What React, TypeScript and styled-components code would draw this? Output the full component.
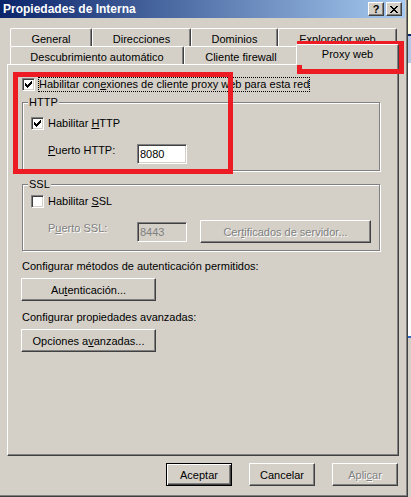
import styled, { createGlobalStyle, css } from "styled-components";

const FACE = "#d4d0c8";
const SHADOW = "#808080";
const DARK = "#404040";

const GlobalStyle = createGlobalStyle`
  html, body {
    margin: 0;
    padding: 0;
    background: ${FACE};
  }
  body {
    font-family: "Liberation Sans", Arial, sans-serif;
    font-size: 11px;
    color: #000;
  }
  #root {
    width: 411px;
    height: 497px;
    overflow: hidden;
  }
`;

const Screen = styled.div`
  display: flex;
  width: 411px;
  height: 497px;
`;

const Window = styled.div`
  position: relative;
  box-sizing: border-box;
  width: 408px;
  height: 497px;
  padding-right: 2px;
  background: ${FACE};
  border-right: 1px solid ${DARK};
  border-bottom: 1px solid ${DARK};
  box-shadow: inset -1px -1px 0 ${SHADOW};
  display: flex;
  flex-direction: column;
`;

const TitleBar = styled.div`
  height: 18px;
  display: flex;
  align-items: center;
  padding: 0 3px;
  background: linear-gradient(to right, #0a246a, #a6caf0);
`;

const TitleText = styled.span`
  flex: 1;
  color: #fff;
  font-weight: bold;
  font-size: 12px;
  line-height: 13px;
  white-space: nowrap;
`;

const CaptionButtons = styled.div`
  display: flex;
  gap: 2px;
`;

const CaptionButton = styled.span`
  box-sizing: border-box;
  width: 16px;
  height: 14px;
  display: flex;
  align-items: center;
  justify-content: center;
  background: ${FACE};
  border: 1px solid;
  border-color: #fff ${DARK} ${DARK} #fff;
  box-shadow: inset -1px -1px 0 ${SHADOW};
  font-weight: bold;
  font-size: 11px;
  line-height: 11px;
`;

const Body = styled.div`
  display: flex;
  flex-direction: column;
  padding: 10px 0 0 7px;
`;

const TabRow = styled.div`
  display: flex;
  align-items: flex-start;
  height: 18px;
  padding-left: 3px;
`;

const Tab = styled.div<{ $w: number; $active?: boolean }>`
  box-sizing: border-box;
  flex-shrink: 0;
  width: ${(p) => p.$w}px;
  height: 18px;
  padding-top: 2px;
  display: flex;
  align-items: center;
  justify-content: center;
  white-space: nowrap;
  background: ${FACE};
  border-top: 1px solid #fff;
  border-left: 1px solid #fff;
  border-right: 1px solid ${DARK};
  border-radius: 2px 2px 0 0;
  box-shadow: inset -1px 0 0 ${SHADOW};
  ${(p) =>
    p.$active &&
    css`
      width: ${p.$w + 4}px;
      height: 21px;
      margin: -2px -2px -1px;
      padding: 2px 0 4px;
      z-index: 1;
    `}
`;

const Panel = styled.div`
  box-sizing: border-box;
  width: 392px;
  height: 392px;
  padding: 12px 0 0 14px;
  display: flex;
  flex-direction: column;
  align-items: flex-start;
  border-top: 1px solid #fff;
  border-left: 1px solid #fff;
  border-right: 1px solid ${DARK};
  border-bottom: 1px solid ${DARK};
  box-shadow: inset -1px -1px 0 ${SHADOW};
`;

const CheckRow = styled.div`
  display: flex;
  align-items: center;
  height: 15px;
`;

const CheckBox = styled.span`
  box-sizing: border-box;
  width: 13px;
  height: 13px;
  display: flex;
  align-items: center;
  justify-content: center;
  background: #fff;
  border: 1px solid;
  border-color: ${SHADOW} #fff #fff ${SHADOW};
  box-shadow: inset 1px 1px 0 ${DARK}, inset -1px -1px 0 ${FACE};
`;

const CheckLabel = styled.span<{ $focused?: boolean }>`
  box-sizing: border-box;
  height: 15px;
  margin-left: 3px;
  line-height: 13px;
  white-space: nowrap;
  border: 1px ${(p) => (p.$focused ? "dotted #000" : "solid transparent")};
`;

const Key = styled.u`
  text-decoration: underline;
`;

const Group = styled.fieldset<{ $mt: number; $pt: number; $pb: number }>`
  box-sizing: border-box;
  width: 358px;
  min-width: 0;
  margin: ${(p) => p.$mt}px 0 0;
  padding: ${(p) => p.$pt}px 0 ${(p) => p.$pb}px 8px;
  border: 1px solid ${SHADOW};
  box-shadow: inset 1px 1px 0 #fff, 1px 1px 0 #fff;
`;

const GroupTitle = styled.legend`
  margin-left: -3px;
  padding: 0 1px;
  line-height: 13px;
  background: ${FACE};
`;

const FieldLabel = styled.span<{ $disabled?: boolean }>`
  box-sizing: border-box;
  width: 89px;
  line-height: 13px;
  white-space: nowrap;
  ${(p) =>
    p.$disabled &&
    css`
      color: ${SHADOW};
      text-shadow: 1px 1px 0 #fff;
    `}
`;

const TextBox = styled.div<{ $disabled?: boolean }>`
  box-sizing: border-box;
  width: 50px;
  height: 20px;
  padding-left: 2px;
  display: flex;
  align-items: center;
  line-height: 13px;
  background: ${(p) => (p.$disabled ? FACE : "#fff")};
  color: ${(p) => (p.$disabled ? SHADOW : "#000")};
  border: 1px solid;
  border-color: ${SHADOW} #fff #fff ${SHADOW};
  box-shadow: inset 1px 1px 0 ${DARK}, inset -1px -1px 0 ${FACE};
`;

const FieldRow = styled.div<{ $mt: number; $lead: number }>`
  display: flex;
  align-items: flex-start;
  margin-top: ${(p) => p.$mt}px;
  padding-left: 17px;

  & > ${FieldLabel}, & > ${TextBox} {
    margin-top: ${(p) => p.$lead}px;
  }
`;

const PushButton = styled.button<{ $w: number; $default?: boolean; $disabled?: boolean }>`
  box-sizing: border-box;
  flex-shrink: 0;
  width: ${(p) => p.$w}px;
  height: 23px;
  padding: 0;
  display: flex;
  align-items: center;
  justify-content: center;
  font: inherit;
  color: #000;
  white-space: nowrap;
  background: ${FACE};
  ${(p) =>
    p.$default
      ? css`
          border: 1px solid #000;
          box-shadow: inset 1px 1px 0 #fff, inset -1px -1px 0 ${DARK},
            inset -2px -2px 0 ${SHADOW};
        `
      : css`
          border: 1px solid;
          border-color: #fff ${DARK} ${DARK} #fff;
          box-shadow: inset -1px -1px 0 ${SHADOW};
        `}
  ${(p) =>
    p.$disabled &&
    css`
      color: ${SHADOW};
      text-shadow: 1px 1px 0 #fff;
    `}
`;

const SideButton = styled(PushButton)<{ $ml: number }>`
  margin-left: ${(p) => p.$ml}px;
`;

const Caption = styled.div<{ $mt: number }>`
  margin-top: ${(p) => p.$mt}px;
  line-height: 13px;
  white-space: nowrap;
`;

const PanelButton = styled(PushButton)<{ $mt: number }>`
  margin: ${(p) => p.$mt}px 0 0 -1px;
`;

const DialogButtons = styled.div`
  box-sizing: border-box;
  width: 392px;
  margin-top: 7px;
  padding-right: 1px;
  display: flex;
  justify-content: flex-end;
  gap: 17px;
`;

const Highlight = styled.div<{ $x: number; $y: number; $w: number; $h: number }>`
  position: absolute;
  box-sizing: border-box;
  left: ${(p) => p.$x}px;
  top: ${(p) => p.$y}px;
  width: ${(p) => p.$w}px;
  height: ${(p) => p.$h}px;
  border: 5px solid #ed1c24;
  pointer-events: none;
`;

const Backdrop = styled.div`
  flex: 1;
  display: flex;
  flex-direction: column;
  background: ${FACE};
`;

const Band = styled.div<{ $h: number; $bg: string }>`
  flex-shrink: 0;
  height: ${(p) => p.$h}px;
  background: ${(p) => p.$bg};
`;

const Pixels = ({ rows, color = "#000" }: { rows: string[]; color?: string }) => (
  <svg width={rows[0].length} height={rows.length} shapeRendering="crispEdges">
    {rows.flatMap((row, y) =>
      row
        .split("")
        .map((c, x) =>
          c === "#" ? <rect key={`${x}-${y}`} x={x} y={y} width={1} height={1} fill={color} /> : null
        )
    )}
  </svg>
);

const checkGlyph = [
  "......#",
  ".....##",
  "#...###",
  "##.###.",
  "#####..",
  ".###...",
  "..#....",
];

const closeGlyph = [
  "##....##",
  ".##..##.",
  "..####..",
  "...##...",
  "..####..",
  ".##..##.",
  "##....##",
];

const backTabs = [
  { label: "General", width: 82 },
  { label: "Direcciones", width: 99 },
  { label: "Dominios", width: 87 },
  { label: "Explorador web", width: 119 },
];

const frontTabs = [
  { label: "Descubrimiento automático", width: 174 },
  { label: "Cliente firewall", width: 114 },
  { label: "Proxy web", width: 99, active: true },
];

const Check = ({ checked }: { checked?: boolean }) => (
  <CheckBox>{checked && <Pixels rows={checkGlyph} />}</CheckBox>
);

export default function App() {
  return (
    <>
      <GlobalStyle />
      <Screen>
        <Window>
          <TitleBar>
            <TitleText>Propiedades de Interna</TitleText>
            <CaptionButtons>
              <CaptionButton>?</CaptionButton>
              <CaptionButton>
                <Pixels rows={closeGlyph} />
              </CaptionButton>
            </CaptionButtons>
          </TitleBar>

          <Body>
            <TabRow>
              {backTabs.map((t) => (
                <Tab key={t.label} $w={t.width}>
                  {t.label}
                </Tab>
              ))}
            </TabRow>
            <TabRow>
              {frontTabs.map((t) => (
                <Tab key={t.label} $w={t.width} $active={t.active}>
                  {t.label}
                </Tab>
              ))}
            </TabRow>

            <Panel>
              <CheckRow>
                <Check checked />
                <CheckLabel $focused>
                  Habilitar con<Key>e</Key>xiones de cliente proxy web para esta red
                </CheckLabel>
              </CheckRow>

              <Group $mt={4} $pt={7} $pb={6}>
                <GroupTitle>HTTP</GroupTitle>
                <CheckRow>
                  <Check checked />
                  <CheckLabel>
                    Habilitar <Key>H</Key>TTP
                  </CheckLabel>
                </CheckRow>
                <FieldRow $mt={13} $lead={0}>
                  <FieldLabel>
                    <Key>P</Key>uerto HTTP:
                  </FieldLabel>
                  <TextBox>8080</TextBox>
                </FieldRow>
              </Group>

              <Group $mt={7} $pt={3} $pb={7}>
                <GroupTitle>SSL</GroupTitle>
                <CheckRow>
                  <Check />
                  <CheckLabel>
                    Habilitar <Key>S</Key>SL
                  </CheckLabel>
                </CheckRow>
                <FieldRow $mt={11} $lead={2}>
                  <FieldLabel $disabled>
                    P<Key>u</Key>erto SSL:
                  </FieldLabel>
                  <TextBox $disabled>8443</TextBox>
                  <SideButton $w={171} $ml={13} $disabled>
                    Cer<Key>t</Key>ificados de servidor...
                  </SideButton>
                </FieldRow>
              </Group>

              <Caption $mt={9}>Configurar métodos de autenticación permitidos:</Caption>
              <PanelButton $w={135} $mt={5}>
                Au<Key>t</Key>enticación...
              </PanelButton>

              <Caption $mt={10}>Configurar propiedades avanzadas:</Caption>
              <PanelButton $w={135} $mt={5}>
                Opciones a<Key>v</Key>anzadas...
              </PanelButton>
            </Panel>

            <DialogButtons>
              <PushButton $w={66} $default>
                Aceptar
              </PushButton>
              <PushButton $w={66}>Cancelar</PushButton>
              <PushButton $w={66} $disabled>
                Apli<Key>c</Key>ar
              </PushButton>
            </DialogButtons>
          </Body>

          <Highlight $x={297} $y={41} $w={107} $h={33} />
          <Highlight $x={13} $y={72} $w={220} $h={102} />
        </Window>

        <Backdrop>
          <Band $h={34} $bg="#ffffe1" />
          <Band $h={2} $bg="#0a246a" />
          <Band $h={27} $bg="#b4c8e8" />
          <Band $h={273} $bg="#ffffff" />
          <Band $h={2} $bg="#316ac5" />
        </Backdrop>
      </Screen>
    </>
  );
}
